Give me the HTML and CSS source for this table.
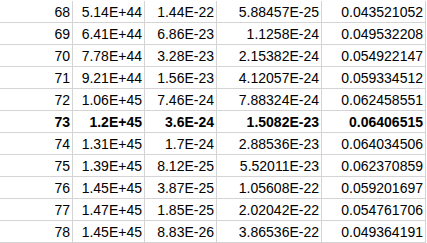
FILE: index.html
```html
<!DOCTYPE html>
<html>
<head>
<meta charset="utf-8">
<link rel="stylesheet" href="styles.css">
</head>
<body>
<div class="sheet">
  <div class="row"><div class="c n">68</div><div class="c">5.14E+44</div><div class="c">1.44E-22</div><div class="c w">5.88457E-25</div><div class="c w2">0.043521052</div></div>
  <div class="row"><div class="c n">69</div><div class="c">6.41E+44</div><div class="c">6.86E-23</div><div class="c w">1.1258E-24</div><div class="c w2">0.049532208</div></div>
  <div class="row"><div class="c n">70</div><div class="c">7.78E+44</div><div class="c">3.28E-23</div><div class="c w">2.15382E-24</div><div class="c w2">0.054922147</div></div>
  <div class="row"><div class="c n">71</div><div class="c">9.21E+44</div><div class="c">1.56E-23</div><div class="c w">4.12057E-24</div><div class="c w2">0.059334512</div></div>
  <div class="row"><div class="c n">72</div><div class="c">1.06E+45</div><div class="c">7.46E-24</div><div class="c w">7.88324E-24</div><div class="c w2">0.062458551</div></div>
  <div class="row bold"><div class="c n">73</div><div class="c">1.2E+45</div><div class="c">3.6E-24</div><div class="c w">1.5082E-23</div><div class="c w2">0.06406515</div></div>
  <div class="row"><div class="c n">74</div><div class="c">1.31E+45</div><div class="c">1.7E-24</div><div class="c w">2.88536E-23</div><div class="c w2">0.064034506</div></div>
  <div class="row"><div class="c n">75</div><div class="c">1.39E+45</div><div class="c">8.12E-25</div><div class="c w">5.52011E-23</div><div class="c w2">0.062370859</div></div>
  <div class="row"><div class="c n">76</div><div class="c">1.45E+45</div><div class="c">3.87E-25</div><div class="c w">1.05608E-22</div><div class="c w2">0.059201697</div></div>
  <div class="row"><div class="c n">77</div><div class="c">1.47E+45</div><div class="c">1.85E-25</div><div class="c w">2.02042E-22</div><div class="c w2">0.054761706</div></div>
  <div class="row"><div class="c n">78</div><div class="c">1.45E+45</div><div class="c">8.83E-26</div><div class="c w">3.86536E-22</div><div class="c w2">0.049364191</div></div>
</div>
</body>
</html>
```
FILE: styles.css
```css
html, body {
  margin: 0;
  padding: 0;
  background: #ffffff;
}
.sheet {
  padding-top: 1px;
  width: 427px;
  font-family: "Liberation Sans", Arial, sans-serif;
  font-size: 14px;
  color: #000000;
}
.row {
  display: grid;
  grid-template-columns: 73px 72px 72px 105px 104px;
  height: 22px;
}
.c {
  box-sizing: border-box;
  height: 22px;
  padding-top: 1px;
  line-height: 20px;
  border-right: 1px solid #d4d4d4;
  border-bottom: 1px solid #d4d4d4;
  text-align: right;
  padding-right: 2px;
  white-space: nowrap;
  overflow: hidden;
}
.bold .c {
  font-weight: 700;
}
```
